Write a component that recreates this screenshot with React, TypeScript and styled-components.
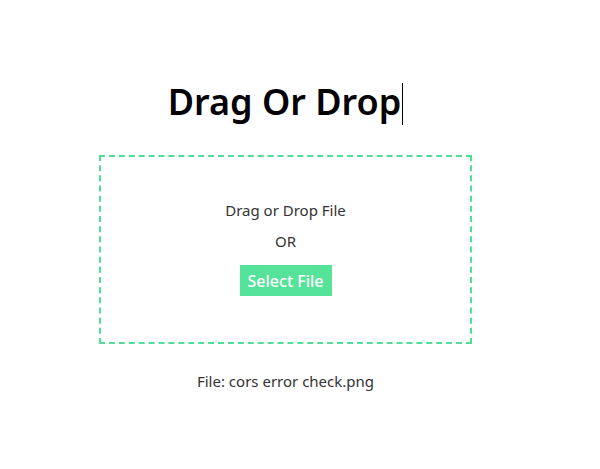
import React from 'react';
import styled, {createGlobalStyle} from 'styled-components';

const GlobalStyle = createGlobalStyle`
  body {
    margin: 0;
    background: #fff;
    font-family: "Noto Sans", "Open Sans", sans-serif;
    color: #222;
  }
`;

const Page = styled.div`
  width: 571px;
  display: flex;
  flex-direction: column;
  align-items: center;
  padding-top: 76px;
`;

const Title = styled.h1`
  margin: 0;
  font-size: 36px;
  font-weight: 600;
  line-height: 52px;
  color: #000;
  display: flex;
  align-items: center;
`;

const Caret = styled.span`
  display: inline-block;
  width: 1px;
  height: 42px;
  background: #000;
  margin-left: 1px;
  margin-top: 4px;
`;

const DropZone = styled.div`
  box-sizing: border-box;
  margin-top: 27px;
  width: 373px;
  height: 189px;
  padding-bottom: 4px;
  border: 2px dashed #52dd98;
  display: flex;
  flex-direction: column;
  align-items: center;
  justify-content: center;
  gap: 9px;
`;

const Hint = styled.p`
  margin: 0;
  font-size: 15px;
  line-height: 22px;
  color: #333;
`;

const SelectButton = styled.button`
  margin-top: 4px;
  width: 92px;
  height: 31px;
  border: none;
  background: #55e39a;
  color: #fff;
  font-family: "Noto Sans", "Open Sans", sans-serif;
  font-size: 16px;
  font-weight: 500;
  padding: 0;
`;

const FileName = styled.p`
  margin: 26px 0 0;
  font-size: 15px;
  line-height: 22px;
  color: #333;
`;

export default function App() {
    return (
        <Page>
            <GlobalStyle/>
            <Title>Drag Or Drop<Caret/></Title>
            <DropZone>
                <Hint>Drag or Drop File</Hint>
                <Hint>OR</Hint>
                <SelectButton>Select File</SelectButton>
            </DropZone>
            <FileName>File: cors error check.png</FileName>
        </Page>
    );
};
